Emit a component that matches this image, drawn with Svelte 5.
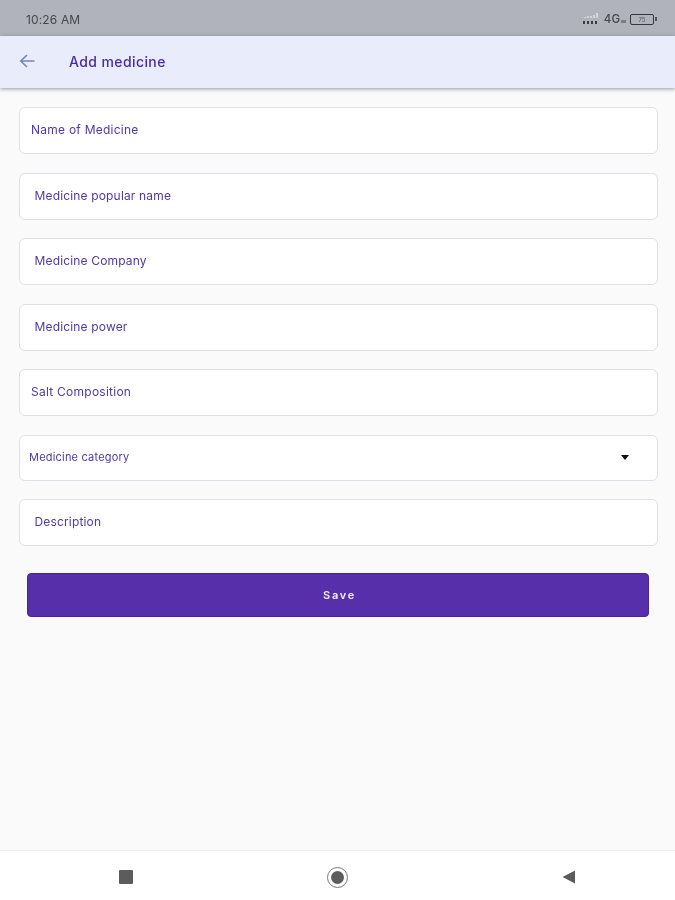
<script>
  const fields = [
    { label: 'Name of Medicine', cls: 'tight' },
    { label: 'Medicine popular name', cls: '' },
    { label: 'Medicine Company', cls: '' },
    { label: 'Medicine power', cls: '' },
    { label: 'Salt Composition', cls: 'tight' }
  ];
</script>

<div class="page">
  <div class="status">
    <span class="time">10:26 AM</span>
    <div class="status-right">
      <svg class="signal" width="17" height="12" viewBox="0 0 17 12" aria-hidden="true">
        <g fill="#d3d5da">
          <rect x="8" y="3" width="2" height="2" />
          <rect x="11" y="2" width="2" height="3" />
          <rect x="14" y="0" width="2" height="5" />
          <rect x="2" y="4" width="2" height="1" />
          <rect x="5" y="3" width="2" height="2" />
        </g>
        <g fill="#3a3c42">
          <rect x="1" y="8" width="2" height="3" />
          <rect x="5" y="8" width="2" height="3" />
          <rect x="9" y="8" width="2" height="3" />
          <rect x="13" y="8" width="2" height="3" />
        </g>
      </svg>
      <span class="net">4G</span>
      <span class="arrows"></span>
      <div class="battery"><span>75</span></div>
      <span class="nub"></span>
    </div>
  </div>

  <header class="bar">
    <svg class="back" width="18" height="18" viewBox="0 0 18 18" aria-hidden="true">
      <path d="M16.5 9H3M9 3 2.8 9 9 15" fill="none" stroke="#7684c8" stroke-width="1.7" />
    </svg>
    <h1>Add medicine</h1>
  </header>

  <main class="form">
    {#each fields as f}
      <div class="field {f.cls}">{f.label}</div>
    {/each}
    <div class="field select">
      <span>Medicine category</span>
      <span class="caret"></span>
    </div>
    <div class="field">Description</div>
    <button class="save" type="button">Save</button>
  </main>

  <nav class="nav">
    <span class="square"></span>
    <span class="circle"><span></span></span>
    <svg class="tri" width="13" height="14" viewBox="0 0 13 14" aria-hidden="true">
      <path d="M0.5 7 13 0.5V13.5Z" fill="#5c5c5e" />
    </svg>
  </nav>
</div>

<style>
  :global(body) {
    margin: 0;
    background: #fafafa;
  }
  .page {
    width: 675px;
    height: 900px;
    display: flex;
    flex-direction: column;
    overflow: hidden;
    font-family: Inter, "Liberation Sans", sans-serif;
    background: #fafafa;
    filter: blur(0.35px);
  }
  .status {
    height: 36px;
    flex: none;
    background: #b0b3bb;
    display: flex;
    align-items: center;
    justify-content: space-between;
    padding: 2px 18px 0 26px;
    box-sizing: border-box;
    color: #45474c;
  }
  .time {
    font-size: 12px;
    letter-spacing: 0.15px;
  }
  .status-right {
    display: flex;
    align-items: center;
  }
  .signal {
    margin-right: 5px;
  }
  .net {
    font-size: 11.5px;
    font-weight: 500;
  }
  .arrows {
    width: 5px;
    height: 3px;
    margin: 5px 4px 0 1px;
    background: #7a7c82;
  }
  .battery {
    width: 24px;
    height: 11px;
    border: 1.5px solid #34363b;
    border-radius: 2px;
    display: flex;
    align-items: center;
    justify-content: center;
    box-sizing: border-box;
  }
  .battery span {
    font-size: 6px;
    color: #55575c;
  }
  .nub {
    width: 2px;
    height: 4px;
    margin-left: 1px;
    background: #55575c;
  }
  .bar {
    height: 52px;
    flex: none;
    box-sizing: border-box;
    background: #e9edfb;
    display: flex;
    align-items: center;
    padding: 0 0 2px 18px;
    box-shadow: 0 1px 4px rgba(70, 70, 80, 0.55);
    position: relative;
  }
  .back {
    margin-right: 33px;
  }
  h1 {
    margin: 0;
    font-size: 14px;
    font-weight: 500;
    letter-spacing: 0.4px;
    color: #4a2aa8;
  }
  .form {
    flex: 1;
    display: flex;
    flex-direction: column;
    gap: 18.5px;
    padding: 19px 17.5px 0 18.5px;
  }
  .field {
    height: 47px;
    flex: none;
    box-sizing: border-box;
    background: #fff;
    border: 1px solid #dfe0e6;
    border-radius: 6px;
    display: flex;
    align-items: center;
    padding: 0 15px 2px;
    font-size: 12px;
    letter-spacing: 0.16px;
    color: #4f39a8;
  }
  .tight {
    padding-left: 11.5px;
    letter-spacing: 0.25px;
  }
  .select {
    height: 46px;
    padding: 0 28px 2px 9.5px;
    justify-content: space-between;
    font-size: 11px;
    letter-spacing: 0.2px;
  }
  .caret {
    width: 0;
    height: 0;
    border-left: 4.5px solid transparent;
    border-right: 4.5px solid transparent;
    border-top: 5px solid #111;
    margin-top: 2px;
  }
  .save {
    height: 44px;
    flex: none;
    margin: 8.5px 8.5px 0 8.5px;
    border: 1px solid #4a23a0;
    border-radius: 4px;
    background: #572fab;
    color: #f3f0fa;
    font-family: inherit;
    font-size: 11px;
    font-weight: 600;
    letter-spacing: 1.7px;
    padding-left: 9px;
  }
  .nav {
    height: 50px;
    flex: none;
    box-sizing: border-box;
    background: #fff;
    border-top: 1px solid #f0f0f0;
    display: flex;
    align-items: center;
    padding: 3px 0 0 119px;
  }
  .square {
    width: 14px;
    height: 14px;
    border-radius: 1px;
    background: #5c5c5e;
  }
  .circle {
    width: 21px;
    height: 21px;
    margin-left: 194px;
    box-sizing: border-box;
    border: 1.5px solid #77777a;
    border-radius: 50%;
    display: flex;
    align-items: center;
    justify-content: center;
  }
  .circle span {
    width: 13px;
    height: 13px;
    border-radius: 50%;
    background: #5c5c5e;
  }
  .tri {
    margin-left: 214px;
  }
</style>
